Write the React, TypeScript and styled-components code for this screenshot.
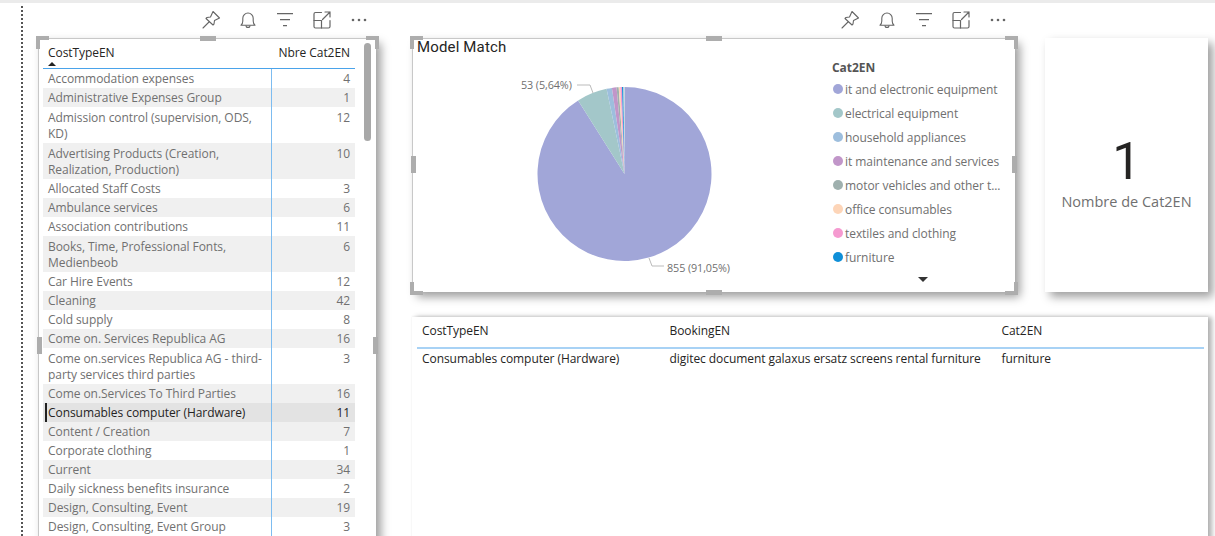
import styled, { createGlobalStyle } from "styled-components";

const GlobalStyle = createGlobalStyle`
  html, body {
    margin: 0;
    padding: 0;
    background: #fff;
    overflow: hidden;
  }
  * { box-sizing: border-box; }
`;

const FONT = `"Open Sans", "Noto Sans", sans-serif`;

const Page = styled.div`
  width: 1215px;
  height: 536px;
  overflow: hidden;
  border-top: 3px solid #ebebeb;
  display: flex;
  font-family: ${FONT};
  font-size: 12px;
  letter-spacing: -0.06px;
  color: #707070;
`;

const Gutter = styled.div`
  width: 38px;
  flex: none;
  padding: 3px 0 0 21px;
`;

const DottedLine = styled.div`
  height: 100%;
  border-left: 2px dotted #555;
`;

const LeftColumn = styled.div`
  width: 338px;
  flex: none;
  margin-right: 36px;
`;

const RightColumn = styled.div`
  width: 796px;
  flex: none;
`;

const TopRow = styled.div`
  display: flex;
  align-items: flex-start;
`;

const PieColumn = styled.div`
  width: 603px;
  margin-right: 30px;
  flex: none;
`;

const Toolbar = styled.div`
  height: 35px;
  margin-right: -2px;
  padding-top: 4px;
  display: flex;
  justify-content: flex-end;
  align-items: flex-start;
`;

const ToolButton = styled.div`
  width: 37.2px;
  height: 26px;
  display: flex;
  justify-content: center;
  align-items: center;
  color: #666;
`;

const Visual = styled.div<{ $h: number }>`
  position: relative;
  height: ${(p) => p.$h}px;
  background: #fff;
  border-top: 1px solid #c8c8c8;
  border-left: 1px solid #c8c8c8;
  box-shadow: 5px 5px 9px rgba(0, 0, 0, 0.38);
`;

const Corner = styled.span<{ $v: "top" | "bottom"; $h: "left" | "right" }>`
  position: absolute;
  ${(p) => p.$v}: -3px;
  ${(p) => p.$h}: -3px;
  width: 13px;
  height: 13px;
  border-${(p) => p.$v}: 4px solid #adadad;
  border-${(p) => p.$h}: 4px solid #adadad;
`;

const EdgeHandle = styled.span<{ $side: "top" | "bottom" | "left" | "right"; $at?: number }>`
  position: absolute;
  background: #adadad;
  ${(p) =>
    p.$side === "top" || p.$side === "bottom"
      ? `${p.$side}: -3px; left: calc(50% - 8px); width: 16px; height: 5px;`
      : `${p.$side}: -2px; top: ${p.$at}px; width: 5px; height: 17px;`}
`;

const TableBox = styled.div`
  height: 100%;
  padding: 0 0 0 4px;
  overflow: hidden;
`;

const HeaderRow = styled.div`
  width: 312px;
  height: 30px;
  padding: 5px 5px 0 5px;
  display: flex;
  justify-content: space-between;
  color: #252423;
  border-bottom: 1px solid #4aa3ea;
  position: relative;
`;

const SortArrow = styled.span`
  position: absolute;
  left: 5px;
  top: 23px;
  width: 0;
  height: 0;
  border-left: 4px solid transparent;
  border-right: 4px solid transparent;
  border-bottom: 4px solid #222;
`;

const Row = styled.div<{ $two?: boolean; $striped?: boolean; $selected?: boolean }>`
  width: 312px;
  height: ${(p) => (p.$two ? 36 : 19)}px;
  padding-top: ${(p) => (p.$two ? 1 : 0)}px;
  display: grid;
  grid-template-columns: 228px 84px;
  line-height: 16px;
  position: relative;
  color: ${(p) => (p.$selected ? "#252423" : "#707070")};
  background: ${(p) => (p.$selected ? "#e3e3e3" : p.$striped ? "#f0f0f0" : "#fff")};
`;

const NameCell = styled.div`
  padding: 2px 3px 2px 5px;
`;

const ValueCell = styled.div`
  padding: 2px 5px;
  text-align: right;
`;

const ColumnRule = styled.span`
  position: absolute;
  left: 232px;
  top: 30px;
  bottom: 0;
  width: 1px;
  background: #7dbcf0;
`;

const SelectedMark = styled.span`
  position: absolute;
  left: 2px;
  top: 0;
  bottom: 0;
  width: 2px;
  background: #222;
`;

const Scrollbar = styled.span`
  position: absolute;
  top: 4px;
  right: 5px;
  width: 7px;
  height: 98px;
  border-radius: 4px;
  background: #a8a8a8;
`;

const PieTitle = styled.div`
  position: absolute;
  left: 4px;
  top: -1px;
  font-family: "Roboto", sans-serif;
  font-size: 15px;
  letter-spacing: 0.15px;
  line-height: 18px;
  color: #252423;
`;

const PieBody = styled.div`
  height: 100%;
  display: flex;
`;

const PieChart = styled.svg`
  width: 419px;
  height: 252px;
  flex: none;
`;

const PieLabel = styled.text`
  font-family: ${FONT};
  font-size: 10.8px;
  letter-spacing: -0.1px;
  fill: #707070;
`;

const Legend = styled.div`
  position: relative;
  flex: 1;
  padding: 20px 0 0 0;
`;

const LegendTitle = styled.div`
  font-weight: 700;
  color: #555;
  line-height: 18px;
`;

const LegendItem = styled.div`
  height: 24px;
  display: flex;
  align-items: center;
  white-space: nowrap;
`;

const LegendDot = styled.span<{ $color: string }>`
  width: 10px;
  height: 10px;
  margin: 0 2px 0 1px;
  border-radius: 50%;
  flex: none;
  background: ${(p) => p.$color};
`;

const LegendArrow = styled.span`
  position: absolute;
  left: 86px;
  top: 238px;
  width: 0;
  height: 0;
  border-left: 5px solid transparent;
  border-right: 5px solid transparent;
  border-top: 5px solid #333;
`;

const KpiCard = styled.div`
  width: 163px;
  height: 254px;
  background: #fff;
  box-shadow: 5px 5px 9px rgba(0, 0, 0, 0.38);
  display: flex;
  flex-direction: column;
  align-items: center;
  padding-top: 93px;
`;

const KpiValue = styled.div`
  font-family: "Roboto", sans-serif;
  font-size: 51px;
  font-weight: 400;
  line-height: 61px;
  color: #252423;
`;

const KpiLabel = styled.div`
  font-size: 14.5px;
  letter-spacing: 0;
  line-height: 20px;
  color: #707070;
`;

const DetailCard = styled.div`
  height: 240px;
  margin-top: 25px;
  padding: 0 4px 0 5px;
  background: #fff;
  box-shadow: 4px 0 5px rgba(0, 0, 0, 0.3), 0 -1px 2px rgba(0, 0, 0, 0.05);
`;

const DetailGrid = styled.div<{ $head?: boolean }>`
  display: grid;
  grid-template-columns: 247.5px 332px 1fr;
  padding-left: 5px;
  height: ${(p) => (p.$head ? 32 : 20)}px;
  line-height: 20px;
  padding-top: ${(p) => (p.$head ? 4 : 0)}px;
  color: #252423;
  ${(p) => p.$head && "border-bottom: 2px solid #a8d2f5;"}
`;

const tableRows: { name: string; value: number; two?: boolean; selected?: boolean }[] = [
  { name: "Accommodation expenses", value: 4 },
  { name: "Administrative Expenses Group", value: 1 },
  { name: "Admission control (supervision, ODS, KD)", value: 12, two: true },
  { name: "Advertising Products (Creation, Realization, Production)", value: 10, two: true },
  { name: "Allocated Staff Costs", value: 3 },
  { name: "Ambulance services", value: 6 },
  { name: "Association contributions", value: 11 },
  { name: "Books, Time, Professional Fonts, Medienbeob", value: 6, two: true },
  { name: "Car Hire Events", value: 12 },
  { name: "Cleaning", value: 42 },
  { name: "Cold supply", value: 8 },
  { name: "Come on. Services Republica AG", value: 16 },
  { name: "Come on.services Republica AG - third-party services third parties", value: 3, two: true },
  { name: "Come on.Services To Third Parties", value: 16 },
  { name: "Consumables computer (Hardware)", value: 11, selected: true },
  { name: "Content / Creation", value: 7 },
  { name: "Corporate clothing", value: 1 },
  { name: "Current", value: 34 },
  { name: "Daily sickness benefits insurance", value: 2 },
  { name: "Design, Consulting, Event", value: 19 },
  { name: "Design, Consulting, Event Group", value: 3 },
];

const legendItems = [
  { label: "it and electronic equipment", color: "#a1a6d8" },
  { label: "electrical equipment", color: "#a3c7c9" },
  { label: "household appliances", color: "#9dbedd" },
  { label: "it maintenance and services", color: "#c196c9" },
  { label: "motor vehicles and other t...", color: "#9fb0ae" },
  { label: "office consumables", color: "#fdd5b8" },
  { label: "textiles and clothing", color: "#f59ad0" },
  { label: "furniture", color: "#0f8fd8" },
];

// share of the whole in percent, in legend order
const slices = [
  { share: 91.05, color: "#a1a6d8" },
  { share: 5.64, color: "#a3c7c9" },
  { share: 1.0, color: "#9dbedd" },
  { share: 0.85, color: "#c196c9" },
  { share: 0.4, color: "#9fb0ae" },
  { share: 0.3, color: "#fdd5b8" },
  { share: 0.3, color: "#f59ad0" },
  { share: 0.26, color: "#0f8fd8" },
  { share: 0.2, color: "#c5d5d8" },
];

const CX = 211.5;
const CY = 135;
const R = 87;

function slicePath(from: number, to: number) {
  const a = (from / 100) * Math.PI * 2;
  const b = (to / 100) * Math.PI * 2;
  const large = to - from > 50 ? 1 : 0;
  const x1 = CX + R * Math.sin(a);
  const y1 = CY - R * Math.cos(a);
  const x2 = CX + R * Math.sin(b);
  const y2 = CY - R * Math.cos(b);
  return `M${CX} ${CY}L${x1} ${y1}A${R} ${R} 0 ${large} 1 ${x2} ${y2}Z`;
}

function VisualTools() {
  return (
    <Toolbar>
      <ToolButton>
        <svg width="20" height="20" viewBox="0 0 20 20" fill="none" stroke="currentColor" strokeWidth="1.1" strokeLinejoin="round" strokeLinecap="round">
          <path d="M12 1.500L18.500 8l-5 2.500-.5 3.500-1 1L5 8.500l1-1 3.500-.5z" />
          <path d="M8 12l-6 6" />
        </svg>
      </ToolButton>
      <ToolButton>
        <svg width="20" height="20" viewBox="0 0 20 20" fill="none" stroke="currentColor" strokeWidth="1.1" strokeLinejoin="round">
          <path d="M3 15.200c1.300-1 1.800-2.400 1.800-4.200V8.200a5.200 5.200 0 0 1 10.400 0V11c0 1.800.5 3.200 1.800 4.200z" />
          <path d="M8 15.400a2 2 0 0 0 4 0" />
        </svg>
      </ToolButton>
      <ToolButton>
        <svg width="20" height="20" viewBox="0 0 20 20" fill="none" stroke="currentColor" strokeWidth="1.2">
          <path d="M2 3.600h16M5 9.600h10M8 15.600h4" />
        </svg>
      </ToolButton>
      <ToolButton>
        <svg width="20" height="20" viewBox="0 0 20 20" fill="none" stroke="currentColor" strokeWidth="1.2" strokeLinejoin="round" strokeLinecap="round">
          <path d="M9.500 2.500H3.500a1.500 1.500 0 0 0-1.500 1.500V16.500A1.500 1.500 0 0 0 3.500 18h13a1.500 1.500 0 0 0 1.500-1.500v-6" />
          <path d="M2 10.500h7.500V18" />
          <path d="M10.500 9.500L18 2M13 2h5v5" />
        </svg>
      </ToolButton>
      <ToolButton>
        <svg width="16" height="6" viewBox="0 0 16 6" fill="currentColor">
          <circle cx="2" cy="3" r="1.300" />
          <circle cx="8" cy="3" r="1.300" />
          <circle cx="14" cy="3" r="1.300" />
        </svg>
      </ToolButton>
    </Toolbar>
  );
}

function Handles() {
  return (
    <>
      <Corner $v="top" $h="left" />
      <Corner $v="top" $h="right" />
      <Corner $v="bottom" $h="left" />
      <Corner $v="bottom" $h="right" />
      <EdgeHandle $side="top" />
      <EdgeHandle $side="bottom" />
      <EdgeHandle $side="left" $at={117} />
      <EdgeHandle $side="right" $at={117} />
    </>
  );
}

export default function App() {
  let stripe = false;
  let acc = 0;
  return (
    <Page>
      <GlobalStyle />
      <Gutter>
        <DottedLine />
      </Gutter>

      <LeftColumn>
        <VisualTools />
        <Visual $h={520}>
          <TableBox>
            <HeaderRow>
              <span>CostTypeEN</span>
              <span>Nbre Cat2EN</span>
              <SortArrow />
            </HeaderRow>
            {tableRows.map((r) => {
              const striped = stripe;
              stripe = !stripe;
              return (
                <Row key={r.name} $two={r.two} $striped={striped} $selected={r.selected}>
                  {r.selected && <SelectedMark />}
                  <NameCell>{r.name}</NameCell>
                  <ValueCell>{r.value}</ValueCell>
                </Row>
              );
            })}
          </TableBox>
          <ColumnRule />
          <Scrollbar />
          <Corner $v="top" $h="left" />
          <Corner $v="top" $h="right" />
          <EdgeHandle $side="top" />
          <EdgeHandle $side="left" $at={298} />
          <EdgeHandle $side="right" $at={298} />
        </Visual>
      </LeftColumn>

      <RightColumn>
        <TopRow>
          <PieColumn>
            <VisualTools />
            <Visual $h={254}>
              <PieTitle>Model Match</PieTitle>
              <PieBody>
                <PieChart viewBox="0 0 419 252">
                  {slices.map((s) => {
                    const from = acc;
                    acc += s.share;
                    return <path key={s.color} d={slicePath(from, acc)} fill={s.color} />;
                  })}
                  <PieLabel x="108" y="50">53 (5,64%)</PieLabel>
                  <path d="M164 46h13l3 8" fill="none" stroke="#bbb" />
                  <path d="M236 219l3 8h12" fill="none" stroke="#bbb" />
                  <PieLabel x="254" y="233">855 (91,05%)</PieLabel>
                </PieChart>
                <Legend>
                  <LegendTitle>Cat2EN</LegendTitle>
                  {legendItems.map((l) => (
                    <LegendItem key={l.label}>
                      <LegendDot $color={l.color} />
                      {l.label}
                    </LegendItem>
                  ))}
                  <LegendArrow />
                </Legend>
              </PieBody>
              <Handles />
            </Visual>
          </PieColumn>
          <div>
            <Toolbar />
            <KpiCard>
              <KpiValue>1</KpiValue>
              <KpiLabel>Nombre de Cat2EN</KpiLabel>
            </KpiCard>
          </div>
        </TopRow>
        <DetailCard>
          <DetailGrid $head>
            <span>CostTypeEN</span>
            <span>BookingEN</span>
            <span>Cat2EN</span>
          </DetailGrid>
          <DetailGrid>
            <span>Consumables computer (Hardware)</span>
            <span>digitec document galaxus ersatz screens rental furniture</span>
            <span>furniture</span>
          </DetailGrid>
        </DetailCard>
      </RightColumn>
    </Page>
  );
}
